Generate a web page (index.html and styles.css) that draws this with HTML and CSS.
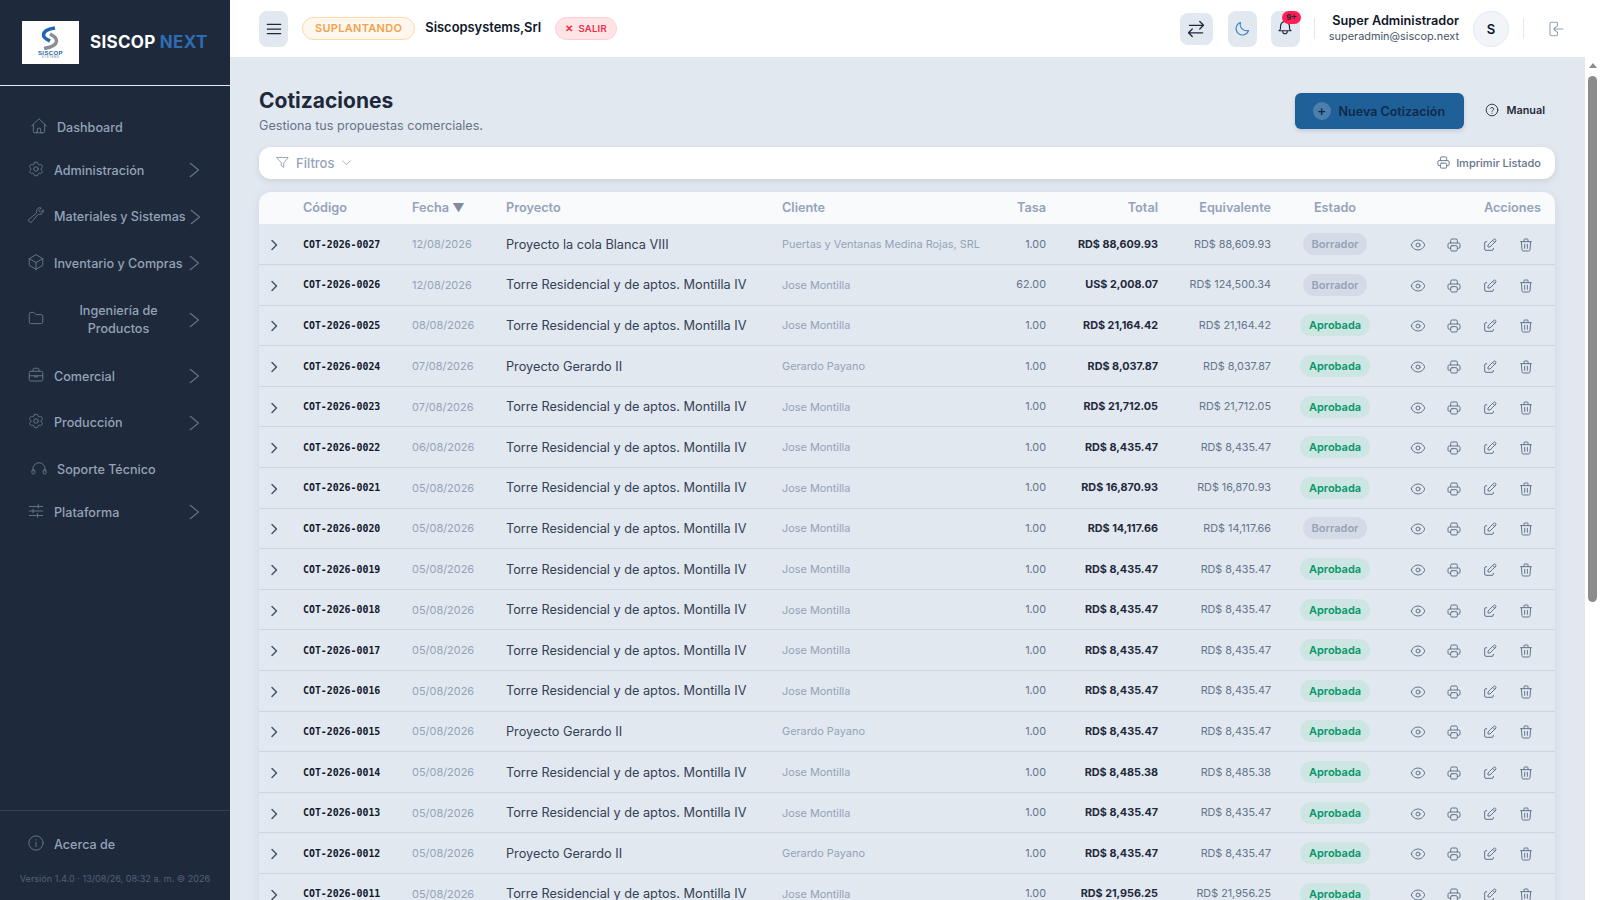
FILE: index.html
```html
<!DOCTYPE html>
<html lang="es">
<head>
  <meta charset="UTF-8">
  <meta name="viewport" content="width=device-width, initial-scale=1.0">
  <title>Cotizaciones</title>
  <link rel="stylesheet" href="styles.css">
</head>
<body>

<!-- iconos reutilizados -->
<svg class="sprite" xmlns="http://www.w3.org/2000/svg">
  <symbol id="i-home" viewBox="0 0 24 24"><path d="M2.25 12l8.954-8.955c.44-.439 1.152-.439 1.591 0L21.75 12M4.5 9.75v10.125c0 .621.504 1.125 1.125 1.125H9.75v-4.875c0-.621.504-1.125 1.125-1.125h2.25c.621 0 1.125.504 1.125 1.125V21h4.125c.621 0 1.125-.504 1.125-1.125V9.75M8.25 21h8.25"/></symbol>
  <symbol id="i-cog" viewBox="0 0 24 24"><path d="M9.594 3.94c.09-.542.56-.94 1.11-.94h2.593c.55 0 1.02.398 1.11.94l.213 1.281c.063.374.313.686.645.87.074.04.147.083.22.127.324.196.72.257 1.075.124l1.217-.456a1.125 1.125 0 011.37.49l1.296 2.247a1.125 1.125 0 01-.26 1.431l-1.003.827c-.293.24-.438.613-.431.992a6.759 6.759 0 010 .255c-.007.378.138.75.43.99l1.005.828c.424.35.534.954.26 1.43l-1.298 2.247a1.125 1.125 0 01-1.369.491l-1.217-.456c-.355-.133-.75-.072-1.076.124a6.57 6.57 0 01-.22.128c-.331.183-.581.495-.644.869l-.213 1.28c-.09.543-.56.941-1.11.941h-2.594c-.55 0-1.02-.398-1.11-.94l-.213-1.281c-.062-.374-.312-.686-.644-.87a6.52 6.52 0 01-.22-.127c-.325-.196-.72-.257-1.076-.124l-1.217.456a1.125 1.125 0 01-1.369-.49l-1.297-2.247a1.125 1.125 0 01.26-1.431l1.004-.827c.292-.24.437-.613.43-.992a6.932 6.932 0 010-.255c.007-.378-.138-.75-.43-.99l-1.004-.828a1.125 1.125 0 01-.26-1.43l1.297-2.247a1.125 1.125 0 011.37-.491l1.216.456c.356.133.751.072 1.076-.124.072-.044.146-.087.22-.128.332-.183.582-.495.644-.869l.214-1.281z"/><path d="M15 12a3 3 0 11-6 0 3 3 0 016 0z"/></symbol>
  <symbol id="i-wrench" viewBox="0 0 24 24"><path d="M21.75 6.75a4.5 4.5 0 01-4.884 4.484c-1.076-.091-2.264.071-2.95.904l-7.152 8.684a2.548 2.548 0 11-3.586-3.586l8.684-7.152c.833-.686.995-1.874.904-2.95a4.5 4.5 0 016.336-4.486l-3.276 3.276a3.004 3.004 0 002.25 2.25l3.276-3.276c.256.565.398 1.192.398 1.852z"/></symbol>
  <symbol id="i-cube" viewBox="0 0 24 24"><path d="M21 7.5l-9-5.25L3 7.5m18 0l-9 5.25m9-5.25v9l-9 5.25M3 7.5l9 5.25M3 7.5v9l9 5.25m0-9v9"/></symbol>
  <symbol id="i-folder" viewBox="0 0 24 24"><path d="M3 6.5A2 2 0 0 1 5 4.5h4l3 3h7a2 2 0 0 1 2 2v8a2 2 0 0 1-2 2H5a2 2 0 0 1-2-2z"/></symbol>
  <symbol id="i-case" viewBox="0 0 24 24"><rect x="3" y="7" width="18" height="13" rx="2"/><path d="M8 7V5a2 2 0 0 1 2-2h4a2 2 0 0 1 2 2v2M3 13h18M10 13v1.500h4V13"/></symbol>
  <symbol id="i-headset" viewBox="0 0 24 24"><path d="M4 16v-3a8 8 0 0 1 16 0v3"/><rect x="2.500" y="14" width="4" height="6" rx="2"/><rect x="17.500" y="14" width="4" height="6" rx="2"/></symbol>
  <symbol id="i-sliders" viewBox="0 0 24 24"><path d="M3 6h18M3 12h18M3 18h18M15 3.500v5M8 9.500v5M14 15.500v5"/></symbol>
  <symbol id="i-info" viewBox="0 0 24 24"><circle cx="12" cy="12" r="9.500"/><path d="M12 11v6M12 7.500v.5"/></symbol>
  <symbol id="i-chev" viewBox="0 0 24 24"><path d="M8 3l9 9-9 9"/></symbol>
  <symbol id="i-side-chev" viewBox="0 0 24 24"><path d="M7 3l11 9-11 9"/></symbol>
  <symbol id="i-eye" viewBox="0 0 24 24"><path d="M2.036 12.322a1.012 1.012 0 010-.639C3.423 7.51 7.36 4.5 12 4.5c4.638 0 8.573 3.007 9.963 7.178.07.207.07.431 0 .639C20.577 16.49 16.64 19.5 12 19.5c-4.638 0-8.573-3.007-9.963-7.178z"/><path d="M15 12a3 3 0 11-6 0 3 3 0 016 0z"/></symbol>
  <symbol id="i-print" viewBox="0 0 24 24"><path d="M17 17h2a2 2 0 0 0 2-2v-4a2 2 0 0 0-2-2H5a2 2 0 0 0-2 2v4a2 2 0 0 0 2 2h2"/><path d="M17 9V5a2 2 0 0 0-2-2H9a2 2 0 0 0-2 2v4"/><rect x="7" y="13" width="10" height="8" rx="2"/></symbol>
  <symbol id="i-edit" viewBox="0 0 24 24"><path d="M7 7H6a2 2 0 0 0-2 2v9a2 2 0 0 0 2 2h9a2 2 0 0 0 2-2v-1"/><path d="M20.385 6.585a2.100 2.100 0 0 0-2.970-2.970L9 12v3h3l8.385-8.415z"/><path d="M16 5l3 3"/></symbol>
  <symbol id="i-trash" viewBox="0 0 24 24"><path d="M4 7h16M10 11v6M14 11v6M5 7l1 12a2 2 0 0 0 2 2h8a2 2 0 0 0 2-2l1-12M9 7V4a1 1 0 0 1 1-1h4a1 1 0 0 1 1 1v3"/></symbol>
</svg>

<div class="app">

  <aside class="sidebar">
    <div class="brand">
      <div class="brand-logo">
        <svg viewBox="0 0 57 43" width="57" height="43">
          <path class="logo-blue" d="M33 7 C26 8 21.500 10.500 21.500 14 C21.500 17 25 18.500 28 20"/>
          <path class="logo-gray" d="M28 13 C32 15 35 17.500 34.500 20.500 C34 24 28 26.500 22 27.500"/>
          <text x="28.500" y="33.500" text-anchor="middle" class="logo-name">SISCOP</text>
          <text x="28.500" y="37" text-anchor="middle" class="logo-sub">SYSTEMS</text>
        </svg>
      </div>
      <span class="brand-name">SISCOP <span class="brand-next">NEXT</span></span>
    </div>

    <nav class="side-nav">
      <a class="side-link side-link-plain"><svg class="side-icon"><use href="#i-home"/></svg><span>Dashboard</span></a>
      <a class="side-link"><svg class="side-icon"><use href="#i-cog"/></svg><span>Administración</span><svg class="side-chev"><use href="#i-side-chev"/></svg></a>
      <a class="side-link side-link-tall"><svg class="side-icon"><use href="#i-wrench"/></svg><span>Materiales y Sistemas</span><svg class="side-chev"><use href="#i-side-chev"/></svg></a>
      <a class="side-link"><svg class="side-icon"><use href="#i-cube"/></svg><span>Inventario y Compras</span><svg class="side-chev"><use href="#i-side-chev"/></svg></a>
      <a class="side-link side-link-wide"><svg class="side-icon"><use href="#i-folder"/></svg><span class="side-center">Ingeniería de Productos</span><svg class="side-chev"><use href="#i-side-chev"/></svg></a>
      <a class="side-link"><svg class="side-icon"><use href="#i-case"/></svg><span>Comercial</span><svg class="side-chev"><use href="#i-side-chev"/></svg></a>
      <a class="side-link side-link-tall"><svg class="side-icon"><use href="#i-cog"/></svg><span>Producción</span><svg class="side-chev"><use href="#i-side-chev"/></svg></a>
      <a class="side-link side-link-plain side-link-gap"><svg class="side-icon"><use href="#i-headset"/></svg><span>Soporte Técnico</span></a>
      <a class="side-link"><svg class="side-icon"><use href="#i-sliders"/></svg><span>Plataforma</span><svg class="side-chev"><use href="#i-side-chev"/></svg></a>
    </nav>

    <div class="side-foot">
      <a class="side-link"><svg class="side-icon"><use href="#i-info"/></svg><span>Acerca de</span></a>
      <p class="version">Versión 1.4.0 · 13/08/26, 08:32 a. m. © 2026</p>
    </div>
  </aside>

  <div class="workspace">
    <header class="topbar">
      <button class="icon-btn menu-btn">
        <svg viewBox="0 0 24 24" width="20" height="20" class="stroke-dark"><path d="M4 6.500h16M4 12h16M4 17.500h16"/></svg>
      </button>
      <span class="pill-imp">SUPLANTANDO</span>
      <span class="company">Siscopsystems,Srl</span>
      <span class="pill-exit">✕&nbsp; SALIR</span>

      <div class="topbar-right">
        <button class="icon-btn swap-btn">
          <svg viewBox="0 0 24 24" width="20" height="20" class="stroke-dark"><path d="M21 7.500H4M16.500 3L21 7.500 16.500 12M3 16.500h17M7.500 12L3 16.500 7.500 21"/></svg>
        </button>
        <button class="icon-btn">
          <svg viewBox="0 0 24 24" width="17" height="17" class="stroke-blue"><path d="M20.500 14.800A9 9 0 0 1 9.200 3.500a9 9 0 1 0 11.300 11.300z"/></svg>
        </button>
        <button class="icon-btn bell-btn">
          <svg viewBox="0 0 24 24" width="18" height="18" class="stroke-dark bell-icon"><path d="M10 5a2 2 0 1 1 4 0 7 7 0 0 1 4 6v3a4 4 0 0 0 2 3H4a4 4 0 0 0 2-3v-3a7 7 0 0 1 4-6M9 17v1a3 3 0 0 0 6 0v-1"/></svg>
          <span class="bell-count">9+</span>
        </button>
        <span class="top-sep"></span>
        <div class="user">
          <div class="user-name">Super Administrador</div>
          <div class="user-mail">superadmin@siscop.next</div>
        </div>
        <span class="avatar">S</span>
        <span class="top-sep"></span>
        <svg class="logout" viewBox="0 0 24 24" width="18" height="18"><path d="M14 8V5a2 2 0 0 0-2-2H6a2 2 0 0 0-2 2v14a2 2 0 0 0 2 2h6a2 2 0 0 0 2-2v-3M21 12H9M12.500 8.500L9 12l3.500 3.500"/></svg>
      </div>
    </header>

    <div class="below-top">
      <main class="content">
        <div class="page-head">
          <div>
            <h1>Cotizaciones</h1>
            <p class="page-sub">Gestiona tus propuestas comerciales.</p>
          </div>
          <div class="page-actions">
            <button class="btn-new"><span class="btn-plus">+</span>Nueva Cotización</button>
            <a class="btn-manual">
              <svg viewBox="0 0 24 24" width="14" height="14"><circle cx="12" cy="12" r="10"/><path d="M9.200 9.200a3 3 0 0 1 5.600 1c0 2-2.800 2.400-2.800 4M12 17.500v.2"/></svg>
              Manual
            </a>
          </div>
        </div>

        <div class="filter-bar">
          <span class="filter-toggle">
            <svg viewBox="0 0 24 24" width="15" height="15"><path d="M3 4h18l-7 9v7l-4-3v-4z"/></svg>
            Filtros
            <svg viewBox="0 0 24 24" width="13" height="13"><path d="M5 9l7 7 7-7"/></svg>
          </span>
          <span class="print-list">
            <svg width="15" height="15"><use href="#i-print"/></svg>
            Imprimir Listado
          </span>
        </div>

        <div class="table-card">
          <table class="quotes">
            <colgroup>
              <col class="c-exp"><col class="c-code"><col class="c-date"><col class="c-proj"><col class="c-client"><col class="c-rate"><col class="c-total"><col class="c-eq"><col class="c-state"><col class="c-act">
            </colgroup>
            <thead>
              <tr>
                <th></th><th>Código</th><th>Fecha <span class="sort">▼</span></th><th>Proyecto</th><th>Cliente</th>
                <th class="num">Tasa</th><th class="num">Total</th><th class="num">Equivalente</th><th class="mid">Estado</th><th class="num last">Acciones</th>
              </tr>
            </thead>
            <tbody>
              <tr><td class="exp"><svg><use href="#i-chev"/></svg></td><td class="code">COT-2026-0027</td><td class="date">12/08/2026</td><td class="proj">Proyecto la cola Blanca VIII</td><td class="client">Puertas y Ventanas Medina Rojas, SRL</td><td class="num rate">1.00</td><td class="num total">RD$ 88,609.93</td><td class="num eq">RD$ 88,609.93</td><td class="mid"><span class="badge draft">Borrador</span></td><td class="acts"><div class="act-row"><svg><use href="#i-eye"/></svg><svg><use href="#i-print"/></svg><svg><use href="#i-edit"/></svg><svg><use href="#i-trash"/></svg></div></td></tr>
              <tr><td class="exp"><svg><use href="#i-chev"/></svg></td><td class="code">COT-2026-0026</td><td class="date">12/08/2026</td><td class="proj">Torre Residencial y de aptos. Montilla IV</td><td class="client">Jose Montilla</td><td class="num rate">62.00</td><td class="num total">US$ 2,008.07</td><td class="num eq">RD$ 124,500.34</td><td class="mid"><span class="badge draft">Borrador</span></td><td class="acts"><div class="act-row"><svg><use href="#i-eye"/></svg><svg><use href="#i-print"/></svg><svg><use href="#i-edit"/></svg><svg><use href="#i-trash"/></svg></div></td></tr>
              <tr><td class="exp"><svg><use href="#i-chev"/></svg></td><td class="code">COT-2026-0025</td><td class="date">08/08/2026</td><td class="proj">Torre Residencial y de aptos. Montilla IV</td><td class="client">Jose Montilla</td><td class="num rate">1.00</td><td class="num total">RD$ 21,164.42</td><td class="num eq">RD$ 21,164.42</td><td class="mid"><span class="badge ok">Aprobada</span></td><td class="acts"><div class="act-row"><svg><use href="#i-eye"/></svg><svg><use href="#i-print"/></svg><svg><use href="#i-edit"/></svg><svg><use href="#i-trash"/></svg></div></td></tr>
              <tr><td class="exp"><svg><use href="#i-chev"/></svg></td><td class="code">COT-2026-0024</td><td class="date">07/08/2026</td><td class="proj">Proyecto Gerardo II</td><td class="client">Gerardo Payano</td><td class="num rate">1.00</td><td class="num total">RD$ 8,037.87</td><td class="num eq">RD$ 8,037.87</td><td class="mid"><span class="badge ok">Aprobada</span></td><td class="acts"><div class="act-row"><svg><use href="#i-eye"/></svg><svg><use href="#i-print"/></svg><svg><use href="#i-edit"/></svg><svg><use href="#i-trash"/></svg></div></td></tr>
              <tr><td class="exp"><svg><use href="#i-chev"/></svg></td><td class="code">COT-2026-0023</td><td class="date">07/08/2026</td><td class="proj">Torre Residencial y de aptos. Montilla IV</td><td class="client">Jose Montilla</td><td class="num rate">1.00</td><td class="num total">RD$ 21,712.05</td><td class="num eq">RD$ 21,712.05</td><td class="mid"><span class="badge ok">Aprobada</span></td><td class="acts"><div class="act-row"><svg><use href="#i-eye"/></svg><svg><use href="#i-print"/></svg><svg><use href="#i-edit"/></svg><svg><use href="#i-trash"/></svg></div></td></tr>
              <tr><td class="exp"><svg><use href="#i-chev"/></svg></td><td class="code">COT-2026-0022</td><td class="date">06/08/2026</td><td class="proj">Torre Residencial y de aptos. Montilla IV</td><td class="client">Jose Montilla</td><td class="num rate">1.00</td><td class="num total">RD$ 8,435.47</td><td class="num eq">RD$ 8,435.47</td><td class="mid"><span class="badge ok">Aprobada</span></td><td class="acts"><div class="act-row"><svg><use href="#i-eye"/></svg><svg><use href="#i-print"/></svg><svg><use href="#i-edit"/></svg><svg><use href="#i-trash"/></svg></div></td></tr>
              <tr><td class="exp"><svg><use href="#i-chev"/></svg></td><td class="code">COT-2026-0021</td><td class="date">05/08/2026</td><td class="proj">Torre Residencial y de aptos. Montilla IV</td><td class="client">Jose Montilla</td><td class="num rate">1.00</td><td class="num total">RD$ 16,870.93</td><td class="num eq">RD$ 16,870.93</td><td class="mid"><span class="badge ok">Aprobada</span></td><td class="acts"><div class="act-row"><svg><use href="#i-eye"/></svg><svg><use href="#i-print"/></svg><svg><use href="#i-edit"/></svg><svg><use href="#i-trash"/></svg></div></td></tr>
              <tr><td class="exp"><svg><use href="#i-chev"/></svg></td><td class="code">COT-2026-0020</td><td class="date">05/08/2026</td><td class="proj">Torre Residencial y de aptos. Montilla IV</td><td class="client">Jose Montilla</td><td class="num rate">1.00</td><td class="num total">RD$ 14,117.66</td><td class="num eq">RD$ 14,117.66</td><td class="mid"><span class="badge draft">Borrador</span></td><td class="acts"><div class="act-row"><svg><use href="#i-eye"/></svg><svg><use href="#i-print"/></svg><svg><use href="#i-edit"/></svg><svg><use href="#i-trash"/></svg></div></td></tr>
              <tr><td class="exp"><svg><use href="#i-chev"/></svg></td><td class="code">COT-2026-0019</td><td class="date">05/08/2026</td><td class="proj">Torre Residencial y de aptos. Montilla IV</td><td class="client">Jose Montilla</td><td class="num rate">1.00</td><td class="num total">RD$ 8,435.47</td><td class="num eq">RD$ 8,435.47</td><td class="mid"><span class="badge ok">Aprobada</span></td><td class="acts"><div class="act-row"><svg><use href="#i-eye"/></svg><svg><use href="#i-print"/></svg><svg><use href="#i-edit"/></svg><svg><use href="#i-trash"/></svg></div></td></tr>
              <tr><td class="exp"><svg><use href="#i-chev"/></svg></td><td class="code">COT-2026-0018</td><td class="date">05/08/2026</td><td class="proj">Torre Residencial y de aptos. Montilla IV</td><td class="client">Jose Montilla</td><td class="num rate">1.00</td><td class="num total">RD$ 8,435.47</td><td class="num eq">RD$ 8,435.47</td><td class="mid"><span class="badge ok">Aprobada</span></td><td class="acts"><div class="act-row"><svg><use href="#i-eye"/></svg><svg><use href="#i-print"/></svg><svg><use href="#i-edit"/></svg><svg><use href="#i-trash"/></svg></div></td></tr>
              <tr><td class="exp"><svg><use href="#i-chev"/></svg></td><td class="code">COT-2026-0017</td><td class="date">05/08/2026</td><td class="proj">Torre Residencial y de aptos. Montilla IV</td><td class="client">Jose Montilla</td><td class="num rate">1.00</td><td class="num total">RD$ 8,435.47</td><td class="num eq">RD$ 8,435.47</td><td class="mid"><span class="badge ok">Aprobada</span></td><td class="acts"><div class="act-row"><svg><use href="#i-eye"/></svg><svg><use href="#i-print"/></svg><svg><use href="#i-edit"/></svg><svg><use href="#i-trash"/></svg></div></td></tr>
              <tr><td class="exp"><svg><use href="#i-chev"/></svg></td><td class="code">COT-2026-0016</td><td class="date">05/08/2026</td><td class="proj">Torre Residencial y de aptos. Montilla IV</td><td class="client">Jose Montilla</td><td class="num rate">1.00</td><td class="num total">RD$ 8,435.47</td><td class="num eq">RD$ 8,435.47</td><td class="mid"><span class="badge ok">Aprobada</span></td><td class="acts"><div class="act-row"><svg><use href="#i-eye"/></svg><svg><use href="#i-print"/></svg><svg><use href="#i-edit"/></svg><svg><use href="#i-trash"/></svg></div></td></tr>
              <tr><td class="exp"><svg><use href="#i-chev"/></svg></td><td class="code">COT-2026-0015</td><td class="date">05/08/2026</td><td class="proj">Proyecto Gerardo II</td><td class="client">Gerardo Payano</td><td class="num rate">1.00</td><td class="num total">RD$ 8,435.47</td><td class="num eq">RD$ 8,435.47</td><td class="mid"><span class="badge ok">Aprobada</span></td><td class="acts"><div class="act-row"><svg><use href="#i-eye"/></svg><svg><use href="#i-print"/></svg><svg><use href="#i-edit"/></svg><svg><use href="#i-trash"/></svg></div></td></tr>
              <tr><td class="exp"><svg><use href="#i-chev"/></svg></td><td class="code">COT-2026-0014</td><td class="date">05/08/2026</td><td class="proj">Torre Residencial y de aptos. Montilla IV</td><td class="client">Jose Montilla</td><td class="num rate">1.00</td><td class="num total">RD$ 8,485.38</td><td class="num eq">RD$ 8,485.38</td><td class="mid"><span class="badge ok">Aprobada</span></td><td class="acts"><div class="act-row"><svg><use href="#i-eye"/></svg><svg><use href="#i-print"/></svg><svg><use href="#i-edit"/></svg><svg><use href="#i-trash"/></svg></div></td></tr>
              <tr><td class="exp"><svg><use href="#i-chev"/></svg></td><td class="code">COT-2026-0013</td><td class="date">05/08/2026</td><td class="proj">Torre Residencial y de aptos. Montilla IV</td><td class="client">Jose Montilla</td><td class="num rate">1.00</td><td class="num total">RD$ 8,435.47</td><td class="num eq">RD$ 8,435.47</td><td class="mid"><span class="badge ok">Aprobada</span></td><td class="acts"><div class="act-row"><svg><use href="#i-eye"/></svg><svg><use href="#i-print"/></svg><svg><use href="#i-edit"/></svg><svg><use href="#i-trash"/></svg></div></td></tr>
              <tr><td class="exp"><svg><use href="#i-chev"/></svg></td><td class="code">COT-2026-0012</td><td class="date">05/08/2026</td><td class="proj">Proyecto Gerardo II</td><td class="client">Gerardo Payano</td><td class="num rate">1.00</td><td class="num total">RD$ 8,435.47</td><td class="num eq">RD$ 8,435.47</td><td class="mid"><span class="badge ok">Aprobada</span></td><td class="acts"><div class="act-row"><svg><use href="#i-eye"/></svg><svg><use href="#i-print"/></svg><svg><use href="#i-edit"/></svg><svg><use href="#i-trash"/></svg></div></td></tr>
              <tr><td class="exp"><svg><use href="#i-chev"/></svg></td><td class="code">COT-2026-0011</td><td class="date">05/08/2026</td><td class="proj">Torre Residencial y de aptos. Montilla IV</td><td class="client">Jose Montilla</td><td class="num rate">1.00</td><td class="num total">RD$ 21,956.25</td><td class="num eq">RD$ 21,956.25</td><td class="mid"><span class="badge ok">Aprobada</span></td><td class="acts"><div class="act-row"><svg><use href="#i-eye"/></svg><svg><use href="#i-print"/></svg><svg><use href="#i-edit"/></svg><svg><use href="#i-trash"/></svg></div></td></tr>
            </tbody>
          </table>
        </div>
      </main>

      <div class="scroll-track">
        <span class="scroll-up"></span>
        <span class="scroll-thumb"></span>
      </div>
    </div>
  </div>
</div>

</body>
</html>
```

FILE: styles.css
```css
* {
  box-sizing: border-box;
}

html, body {
  margin: 0;
  padding: 0;
  height: 100%;
  overflow: hidden;
}

body {
  font-family: Inter, "Liberation Sans", sans-serif;
  color: #1e293b;
  background-color: #e2e8f0;
}

.sprite {
  display: none;
}

svg {
  fill: none;
  stroke: currentColor;
  stroke-width: 1.5;
  stroke-linecap: round;
  stroke-linejoin: round;
}

.app {
  display: flex;
  height: 900px;
}

/* Barra lateral */
.sidebar {
  width: 230px;
  flex-shrink: 0;
  display: flex;
  flex-direction: column;
  background-color: #1e293b;
  color: #94a3b8;
}

.brand {
  height: 86px;
  flex-shrink: 0;
  display: flex;
  align-items: center;
  gap: 11px;
  padding: 0 22px 1px;
  border-bottom: 1px solid #e2e8f0;
}

.brand-logo {
  width: 57px;
  height: 43px;
  background-color: #fff;
}

.brand-logo svg {
  display: block;
}

.logo-blue {
  stroke: #1f66b0;
  stroke-width: 3.5;
  stroke-linecap: butt;
}

.logo-gray {
  stroke: #8a8f96;
  stroke-width: 3.5;
  stroke-linecap: butt;
}

.logo-name {
  font-family: "Liberation Sans", sans-serif;
  font-size: 6px;
  font-weight: 700;
  letter-spacing: 0.4px;
  fill: #2b5f9e;
  stroke: none;
}

.logo-sub {
  font-family: "Liberation Sans", sans-serif;
  font-size: 3px;
  letter-spacing: 0.5px;
  fill: #6b7785;
  stroke: none;
}

.brand-name {
  font-size: 17px;
  font-weight: 700;
  letter-spacing: 0.3px;
  color: #fff;
}

.brand-next {
  color: #2f6db3;
}

.side-nav {
  flex: 1;
  padding-top: 21px;
}

.side-link {
  display: flex;
  align-items: center;
  height: 46px;
  padding: 0 29px 0 27px;
  font-size: 12.600px;
  font-weight: 500;
  white-space: nowrap;
  color: #94a3b8;
}

.side-link-tall {
  height: 47px;
}

.side-link-plain {
  height: 40px;
  padding-left: 30px;
}

.side-link-gap {
  margin-top: 3px;
}

.side-link-wide {
  height: 67px;
}

.side-icon {
  width: 18px;
  height: 18px;
  flex-shrink: 0;
  margin: -3px 9px 0 0;
  color: #64748b;
  stroke-width: 1.3;
}

.side-chev {
  width: 18px;
  height: 18px;
  margin-left: auto;
  margin-right: -2px;
  color: #64748b;
  flex-shrink: 0;
}

.side-center {
  flex: 1;
  padding: 0 8px 0 6px;
  text-align: center;
  line-height: 18px;
  white-space: normal;
}

.side-foot {
  border-top: 1px solid #334155;
  padding-top: 10px;
  height: 90px;
}

.version {
  margin: 6px 0 0;
  text-align: center;
  font-size: 9.100px;
  color: #53617a;
}

/* Cabecera */
.workspace {
  flex: 1;
  min-width: 0;
  display: flex;
  flex-direction: column;
}

.topbar {
  height: 57px;
  flex-shrink: 0;
  display: flex;
  align-items: center;
  padding: 0 29px;
  background-color: #fff;
}

.icon-btn {
  position: relative;
  width: 29px;
  height: 36px;
  display: flex;
  align-items: center;
  justify-content: center;
  padding: 0;
  border: none;
  border-radius: 8px;
  background-color: #e2e8f0;
}

.stroke-dark {
  color: #1e293b;
}

.stroke-blue {
  color: #3b82c4;
}

.pill-imp {
  margin-left: 14px;
  height: 23px;
  padding: 0 12px 2px;
  display: flex;
  align-items: center;
  font-size: 11px;
  font-weight: 600;
  letter-spacing: 0.3px;
  color: #f0a24e;
  background-color: #fff7ed;
  border: 1px solid #fed7aa;
  border-radius: 12px;
}

.company {
  margin-left: 10px;
  padding-bottom: 2px;
  font-size: 12.900px;
  font-weight: 600;
  color: #0f172a;
}

.pill-exit {
  margin-left: 14px;
  height: 23px;
  padding: 0 9px;
  display: flex;
  align-items: center;
  font-size: 9.500px;
  font-weight: 600;
  letter-spacing: 0.2px;
  color: #ef2b4a;
  background-color: #ffe4e6;
  border: 1px solid #fecdd3;
  border-radius: 12px;
}

.topbar-right {
  margin-left: auto;
  margin-right: 6px;
  display: flex;
  align-items: center;
}

.swap-btn {
  width: 33px;
  height: 32px;
  margin-right: 15px;
}

.bell-btn {
  margin-left: 14px;
}

.bell-icon {
  margin-top: -4px;
}

.bell-count {
  position: absolute;
  top: 0;
  right: -1px;
  width: 19px;
  height: 13px;
  border-radius: 7px;
  background-color: #ff1f55;
  color: #1e293b;
  font-size: 9px;
  font-weight: 700;
  line-height: 13px;
  text-align: center;
}

.top-sep {
  width: 1px;
  height: 21px;
  margin: 0 14px;
  background-color: #e2e8f0;
}

.user {
  text-align: right;
}

.user-name {
  font-size: 12.700px;
  font-weight: 600;
  line-height: 16px;
  color: #0f172a;
}

.user-mail {
  font-size: 10.900px;
  line-height: 15px;
  color: #475569;
}

.avatar {
  width: 36px;
  height: 36px;
  margin-left: 14px;
  display: flex;
  align-items: center;
  justify-content: center;
  font-size: 13px;
  font-weight: 600;
  border-radius: 50%;
  background-color: #f1f5f9;
  border: 1px solid #e2e8f0;
  color: #0f172a;
}

.logout {
  margin-left: 9px;
  color: #94a3b8;
}

/* Contenido */
.below-top {
  flex: 1;
  min-height: 0;
  display: flex;
}

.content {
  flex: 1;
  min-width: 0;
  overflow: hidden;
  padding: 29px 30px 0 29px;
}

.scroll-track {
  width: 15px;
  flex-shrink: 0;
  background-color: #fff;
  padding-top: 6px;
  display: flex;
  flex-direction: column;
  align-items: center;
}

.scroll-up {
  width: 0;
  height: 0;
  border-left: 4.500px solid transparent;
  border-right: 4.500px solid transparent;
  border-bottom: 5px solid #8c8c8c;
}

.scroll-thumb {
  width: 9px;
  height: 526px;
  margin-top: 8px;
  border-radius: 5px;
  background-color: #8c8c8c;
}

.page-head {
  display: flex;
  justify-content: space-between;
  align-items: flex-start;
  height: 61px;
}

h1 {
  margin: 0;
  padding-top: 1px;
  font-size: 21px;
  font-weight: 700;
  line-height: 27px;
  color: #1e293b;
}

.page-sub {
  margin: 4px 0 0;
  font-size: 12.600px;
  line-height: 16px;
  color: #64748b;
}

.page-actions {
  display: flex;
  align-items: center;
  margin-top: 7px;
}

.btn-new {
  width: 169px;
  height: 36px;
  display: flex;
  align-items: center;
  gap: 8px;
  padding: 0 18px;
  border: none;
  border-radius: 6px;
  background-color: #1f6098;
  box-shadow: 0 2px 4px rgba(30, 41, 59, 0.15);
  font-family: inherit;
  font-size: 12.500px;
  font-weight: 600;
  white-space: nowrap;
  color: #0f2a4a;
}

.btn-plus {
  width: 18px;
  height: 18px;
  flex-shrink: 0;
  border-radius: 50%;
  background-color: rgba(255, 255, 255, 0.2);
  font-size: 14px;
  font-weight: 500;
  line-height: 18px;
  text-align: center;
}

.btn-manual {
  display: flex;
  align-items: center;
  gap: 8px;
  margin-left: 21px;
  margin-right: 10px;
  padding-bottom: 2px;
  font-size: 10.800px;
  font-weight: 600;
  color: #1e293b;
}

.filter-bar {
  height: 32px;
  display: flex;
  justify-content: space-between;
  align-items: center;
  padding: 0 14px 1px 16px;
  background-color: #fff;
  border-radius: 12px;
  box-shadow: 0 2px 6px rgba(30, 41, 59, 0.12);
}

.filter-toggle {
  display: flex;
  align-items: center;
  gap: 6px;
  font-size: 13px;
  font-weight: 500;
  color: #94a3b8;
}

.print-list {
  display: flex;
  align-items: center;
  gap: 5px;
  font-size: 11px;
  font-weight: 500;
  color: #64748b;
}

.table-card {
  margin-top: 13px;
  border-radius: 12px 12px 0 0;
  box-shadow: 0 2px 12px rgba(30, 41, 59, 0.08);
}

/* Tabla */
.quotes {
  width: 100%;
  table-layout: fixed;
  border-collapse: collapse;
}

.c-exp { width: 44px; }
.c-code { width: 109px; }
.c-date { width: 94px; }
.c-proj { width: 276px; }
.c-client { width: 218px; }
.c-rate { width: 46px; }
.c-total { width: 112px; }
.c-eq { width: 113px; }
.c-state { width: 128px; }
.c-act { width: 156px; }

.quotes th {
  height: 32px;
  padding: 0 0 2px;
  text-align: left;
  font-size: 12.700px;
  font-weight: 600;
  color: #94a3b8;
  background-color: #f8fafc;
}

.quotes th:first-child {
  border-top-left-radius: 12px;
}

.quotes th:last-child {
  border-top-right-radius: 12px;
}

.quotes td {
  height: 40.600px;
  padding: 0;
  border-bottom: 1px solid #cbd5e1;
  font-size: 10.800px;
  white-space: nowrap;
}

.sort {
  font-size: 12px;
  color: #7f8ba0;
}

.quotes .num {
  text-align: right;
}

.quotes .mid {
  text-align: center;
}

.quotes .last {
  padding-right: 14px;
}

.quotes .exp {
  padding-left: 9px;
  color: #475569;
}

.exp svg {
  display: block;
  width: 12px;
  height: 12px;
  margin-top: 2px;
  stroke-width: 3;
}

.quotes .code {
  font-family: "DejaVu Sans Mono", monospace;
  font-size: 9.900px;
  font-weight: 700;
  color: #0f172a;
}

.quotes .date {
  font-size: 10.950px;
  color: #94a3b8;
}

.quotes .proj {
  font-size: 12.730px;
  color: #334155;
}

.quotes .client {
  font-size: 10.900px;
  color: #94a3b8;
}

.rate, .eq {
  color: #64748b;
}

.total {
  font-weight: 700;
  color: #1e293b;
}

.quotes .badge {
  display: inline-block;
  height: 22px;
  padding: 0 9px;
  border-radius: 11px;
  font-size: 11px;
  font-weight: 600;
  line-height: 22px;
}

.draft {
  background-color: #d5dbe6;
  color: #94a3b8;
}

.ok {
  background-color: #cde6e3;
  color: #059669;
}

.act-row {
  display: flex;
  gap: 20px;
  padding: 2px 0 0 11px;
  color: #64748b;
}

.act-row svg {
  width: 16px;
  height: 16px;
}
```
